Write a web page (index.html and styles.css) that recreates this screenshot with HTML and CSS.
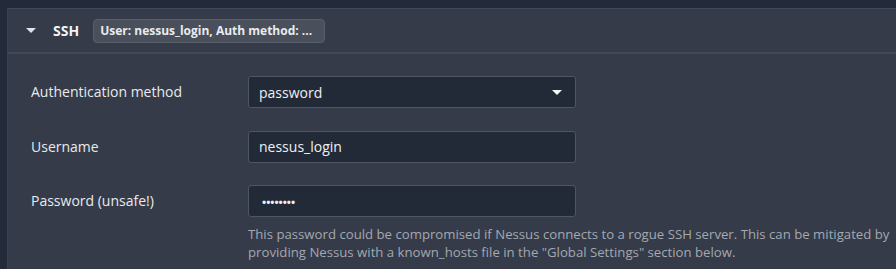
FILE: index.html
```html
<!DOCTYPE html>
<html lang="en">
<head>
  <meta charset="UTF-8">
  <title>SSH credentials</title>
  <link rel="stylesheet" href="styles.css">
</head>
<body>
  <div class="panel">
    <div class="panel-header">
      <span class="caret"></span>
      <span class="panel-title">SSH</span>
      <span class="summary">User: nessus_login, Auth method: ...</span>
    </div>
    <div class="panel-body">
      <div class="field">
        <label class="field-label">Authentication method</label>
        <div class="field-control">
          <div class="select">
            <span>password</span>
            <span class="select-arrow"></span>
          </div>
        </div>
      </div>
      <div class="field">
        <label class="field-label">Username</label>
        <div class="field-control">
          <div class="input">nessus_login</div>
        </div>
      </div>
      <div class="field">
        <label class="field-label">Password (unsafe!)</label>
        <div class="field-control">
          <div class="input dots">••••••••</div>
          <p class="help">This password could be compromised if Nessus connects to a rogue SSH server. This can be mitigated by providing Nessus with a known_hosts file in the "Global Settings" section below.</p>
        </div>
      </div>
    </div>
  </div>
</body>
</html>
```

FILE: styles.css
```css
body {
  margin: 0;
  padding: 8px 0 0 7px;
  background: #232b3b;
  font-family: "Open Sans", "Noto Sans", sans-serif;
  color: #e6e8eb;
  height: 269px;
  box-sizing: border-box;
  overflow: hidden;
}

.panel {
  background: #353b48;
  border-top: 1px solid #444b58;
  border-left: 1px solid #3a414e;
  height: 100%;
}

.panel-header {
  display: flex;
  align-items: center;
  height: 43px;
  padding-left: 18px;
  border-bottom: 2px solid #434a57;
}

.caret {
  width: 0;
  height: 0;
  border-left: 5px solid transparent;
  border-right: 5px solid transparent;
  border-top: 5px solid #dfe2e6;
  margin-right: 17px;
}

.panel-title {
  font-size: 14px;
  font-weight: 700;
  color: #f2f3f5;
  margin-right: 14px;
}

.summary {
  background: #4a505b;
  border: 1px solid #5a606b;
  border-radius: 4px;
  font-size: 12px;
  font-weight: 700;
  color: #e9ebee;
  padding: 3px 12px 4px 6px;
  line-height: 15px;
}

.panel-body {
  padding: 22px 0 0 23px;
}

.field {
  display: flex;
  margin-bottom: 22.5px;
}

.field-label {
  width: 217px;
  font-size: 14px;
  line-height: 32px;
  color: #e8eaed;
}

.field-control {
  width: 645px;
}

.select,
.input {
  width: 328px;
  height: 32px;
  box-sizing: border-box;
  background: #222a38;
  border: 1px solid #4e5563;
  border-radius: 3px;
  font-size: 14px;
  color: #eef0f2;
  display: flex;
  align-items: center;
  padding: 0 10px;
}

.select {
  justify-content: space-between;
  padding-right: 13px;
}

.select-arrow {
  width: 0;
  height: 0;
  border-left: 5px solid transparent;
  border-right: 5px solid transparent;
  border-top: 5px solid #f4f5f7;
}

.dots {
  font-size: 11px;
  font-weight: 700;
  padding-left: 13px;
}

.help {
  margin: 8px 0 0;
  font-size: 13.2px;
  line-height: 18px;
  color: #a3a8b1;
}
```
